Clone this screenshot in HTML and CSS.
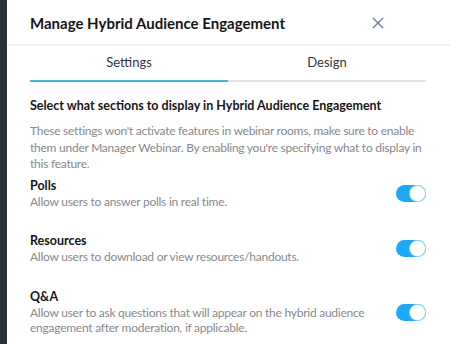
FILE: index.html
```html
<!DOCTYPE html>
<html lang="en">
<head>
    <meta charset="UTF-8">
    <meta name="viewport" content="width=device-width, initial-scale=1.0">
    <title>Manage Hybrid Audience Engagement</title>
    <link rel="stylesheet" href="styles.css">
</head>
<body>

<div class="side-strip"></div>

<div class="modal">
    <div class="modal-header">
        <h1 class="modal-title">Manage Hybrid Audience Engagement</h1>
        <button class="close-button" aria-label="Close">
            <svg width="12" height="12" viewBox="0 0 12 12">
                <path d="M1 1 L11 11 M11 1 L1 11" stroke="#6f7a96" stroke-width="1.4" fill="none"/>
            </svg>
        </button>
    </div>

    <div class="modal-body">
        <!-- Tabs -->
        <div class="tabs">
            <div class="tab active">Settings</div>
            <div class="tab">Design</div>
        </div>

        <h2 class="section-title">Select what sections to display in Hybrid Audience Engagement</h2>
        <p class="section-text">These settings won't activate features in webinar rooms, make sure to enable them under Manager Webinar. By enabling you're specifying what to display in this feature.</p>

        <div class="option">
            <div class="option-info">
                <div class="option-name">Polls</div>
                <div class="option-desc">Allow users to answer polls in real time.</div>
            </div>
            <label class="toggle"><input type="checkbox" checked><span class="slider"></span></label>
        </div>

        <div class="option">
            <div class="option-info">
                <div class="option-name">Resources</div>
                <div class="option-desc">Allow users to download or view resources/handouts.</div>
            </div>
            <label class="toggle"><input type="checkbox" checked><span class="slider"></span></label>
        </div>

        <div class="option">
            <div class="option-info">
                <div class="option-name">Q&amp;A</div>
                <div class="option-desc">Allow user to ask questions that will appear on the hybrid audience engagement after moderation, if applicable.</div>
            </div>
            <label class="toggle"><input type="checkbox" checked><span class="slider"></span></label>
        </div>
    </div>
</div>

</body>
</html>
```

FILE: styles.css
```css
* {
    box-sizing: border-box;
}

body {
    font-family: Lato, "Noto Sans", sans-serif;
    margin: 0;
    padding: 0;
    height: 100vh;
    display: flex;
    flex-direction: row;
    background-color: #fff;
    overflow: hidden;
}

.side-strip {
    width: 7px;
    background-color: #2b3039;
    flex-shrink: 0;
}

.modal {
    flex-grow: 1;
    display: flex;
    flex-direction: column;
    background: #fff;
}

.modal-header {
    height: 46px;
    flex-shrink: 0;
    display: flex;
    align-items: center;
    justify-content: space-between;
    padding: 2px 66px 0 23px;
    border-bottom: 2px solid #f3f3f4;
}

.modal-title {
    margin: 0;
    font-size: 15px;
    font-weight: 700;
    color: #161616;
}

.close-button {
    background: none;
    border: none;
    padding: 0;
    width: 12px;
    height: 12px;
    cursor: pointer;
    display: flex;
}

.modal-body {
    flex-shrink: 0;
    padding: 0 24px 0 23px;
}

.tabs {
    display: flex;
}

.tab {
    flex: 1;
    text-align: center;
    font-size: 13px;
    line-height: 15px;
    color: #33363d;
    padding: 9px 0 10px;
    border-bottom: 2px solid #e1e4eb;
}

.tab.active {
    border-bottom-color: #44b4dd;
}

.section-title {
    margin: 15px 0 0;
    font-size: 12.5px;
    font-weight: 700;
    color: #161616;
    line-height: 17px;
}

.section-text {
    margin: 9px 0 0;
    font-size: 12px;
    letter-spacing: -0.25px;
    line-height: 16.5px;
    color: #88898d;
}

.option {
    display: flex;
    align-items: center;
    justify-content: space-between;
    margin-top: 5px;
}

.option + .option {
    margin-top: 24px;
}

.option-name {
    font-size: 12.5px;
    font-weight: 700;
    color: #161616;
    line-height: 16px;
}

.option-desc {
    font-size: 12px;
    letter-spacing: -0.25px;
    line-height: 15.5px;
    color: #88898d;
    padding-right: 24px;
}

.toggle {
    position: relative;
    width: 30px;
    height: 17px;
    flex-shrink: 0;
}

.toggle input {
    display: none;
}

.slider {
    position: absolute;
    inset: 0;
    background-color: #1fa9f4;
    border-radius: 9px;
}

/* the knob sits over the track */
.slider::after {
    content: "";
    position: absolute;
    right: 1px;
    top: 1px;
    width: 15px;
    height: 15px;
    border-radius: 50%;
    background: #fff;
    box-shadow: 0 0 0 1px #9cdaf9;
}
```
